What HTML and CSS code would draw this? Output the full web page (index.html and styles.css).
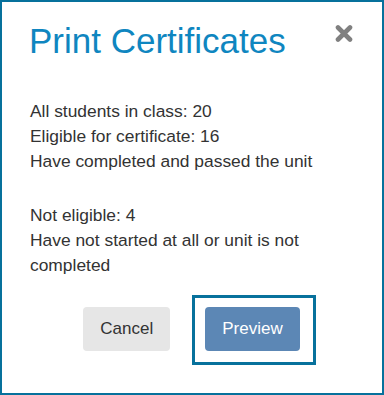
FILE: index.html
```html
<!DOCTYPE html>
<html lang="en">
<head>
  <meta charset="UTF-8">
  <title>Print Certificates</title>
  <link rel="stylesheet" href="styles.css">
</head>
<body>
  <div class="dialog">
    <div class="dialog-header">
      <h1 class="dialog-title">Print Certificates</h1>
      <button class="close-btn" aria-label="Close">
        <svg width="18" height="17" viewBox="0 0 18 17">
          <path d="M3 2.5 L15 14.5 M15 2.5 L3 14.5" stroke="#808080" stroke-width="4.6" stroke-linecap="round" fill="none"/>
        </svg>
      </button>
    </div>
    <div class="dialog-body">
      <p>All students in class: 20<br>Eligible for certificate: 16<br>Have completed and passed the unit</p>
      <p>Not eligible: 4<br>Have not started at all or unit is not completed</p>
    </div>
    <div class="dialog-actions">
      <button class="btn btn-cancel">Cancel</button>
      <button class="btn btn-preview">Preview</button>
    </div>
  </div>
</body>
</html>
```

FILE: styles.css
```css
body {
  margin: 0;
  padding: 0;
  background-color: white;
  font-family: 'Liberation Sans', Arial, sans-serif;
}
.dialog {
  box-sizing: border-box;
  width: 384px;
  height: 395px;
  border: 2px solid #07719c;
  padding: 19px 29px 0 28px;
}
.dialog-header {
  display: flex;
  justify-content: space-between;
  align-items: flex-start;
}
.dialog-title {
  margin: 0 0 0 -1px;
  font-size: 35px;
  line-height: 40px;
  font-weight: normal;
  color: #0f86c0;
}
.close-btn {
  margin-top: 4px;
  padding: 0;
  border: none;
  background: none;
  line-height: 0;
  cursor: pointer;
}
.dialog-body {
  margin-top: 38px;
  font-size: 17.4px;
  line-height: 25px;
  color: #333;
}
.dialog-body p {
  margin: 0 0 29px 0;
}
.dialog-body p:last-child {
  margin-bottom: 0;
}
.dialog-actions {
  display: flex;
  justify-content: center;
  gap: 35px;
  margin-top: 29px;
}
.btn {
  height: 44px;
  padding: 0 17px;
  border: none;
  border-radius: 4px;
  font-family: 'Liberation Sans', Arial, sans-serif;
  font-size: 17px;
  cursor: pointer;
}
.btn-cancel {
  background-color: #e6e6e6;
  color: #333;
}
.btn-preview {
  position: relative;
  background-color: #5c87b5;
  color: white;
}
.btn-preview::after {
  content: "";
  position: absolute;
  top: -12px;
  right: -16px;
  bottom: -14px;
  left: -13px;
  border: 3px solid #07719c;
}
```
